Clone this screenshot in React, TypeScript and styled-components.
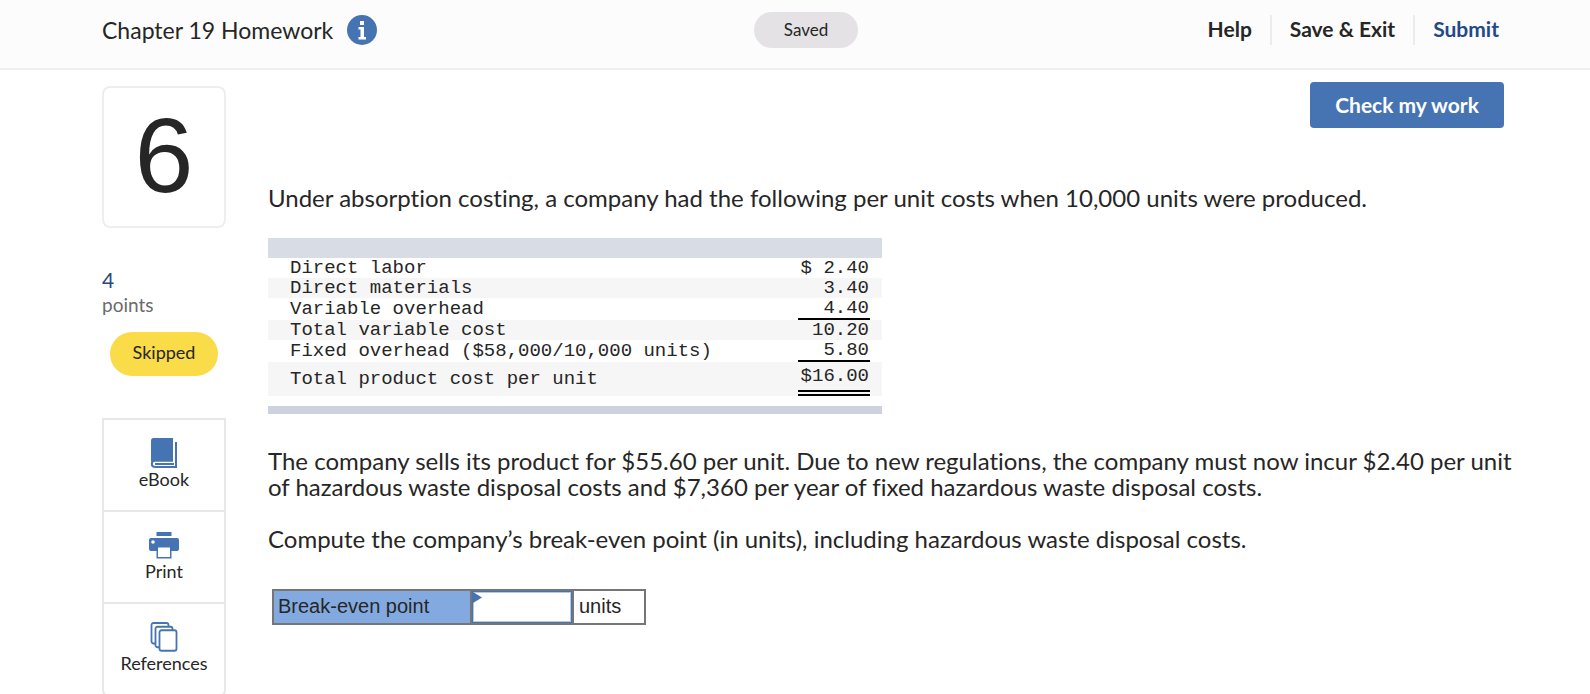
import React from "react";
import styled, { createGlobalStyle } from "styled-components";

const sans = `Lato, "Liberation Sans", sans-serif`;
const blue = "#4674b3";
const ink = "#262626";
const line = "#ececec";

const GlobalStyle = createGlobalStyle`
  * { box-sizing: border-box; }
  body {
    margin: 0;
    background: #fff;
    color: ${ink};
    font-family: ${sans};
    font-variant-ligatures: none;
  }
  button, input { font: inherit; font-variant-ligatures: none; color: inherit; margin: 0; }
`;

const Header = styled.header`
  display: grid;
  grid-template-columns: 1fr auto 1fr;
  align-items: start;
  height: 70px;
  padding: 12px 80px 0 102px;
  background: #fcfcfc;
  border-bottom: 2px solid #efefef;
`;

const TitleGroup = styled.div`
  display: flex;
  align-items: center;
  gap: 14px;
  height: 36px;
`;

const Title = styled.h1`
  margin: 0;
  font-size: 23px;
  line-height: 28px;
  font-weight: 400;
  white-space: nowrap;
`;

const InfoButton = styled.button`
  display: flex;
  padding: 0;
  border: 0;
  background: none;
`;

const SavedPill = styled.div`
  width: 104px;
  height: 36px;
  border-radius: 18px;
  background: #e4e2e5;
  font-size: 17px;
  line-height: 36px;
  text-align: center;
`;

const Nav = styled.nav`
  display: flex;
  justify-content: flex-end;
  align-items: center;
  height: 36px;
`;

const NavButton = styled.button<{ $accent?: boolean }>`
  height: 30px;
  padding: 0 18px 2px;
  border: 0;
  border-left: 2px solid ${line};
  background: none;
  color: ${(p) => (p.$accent ? "#234987" : ink)};
  font-size: 21px;
  line-height: 26px;
  font-weight: 700;
  white-space: nowrap;
  &:first-child { border-left: 0; }
  &:last-child { padding-right: 11px; }
`;

const Main = styled.main`
  display: grid;
  grid-template-columns: 124px minmax(0, 1fr);
  gap: 42px;
  padding: 12px 70px 0 102px;
`;

const Sidebar = styled.aside`
  display: flex;
  flex-direction: column;
  padding-top: 4px;
`;

const QuestionNumber = styled.div`
  height: 142px;
  border: 2px solid #eeeeee;
  border-radius: 8px;
  font-family: "Liberation Sans", sans-serif;
  font-size: 106px;
  line-height: 134px;
  text-align: center;
`;

const Points = styled.div`
  margin-top: 39px;
  color: #6b6b6b;
  font-size: 19px;
  line-height: 25px;
`;

const PointsValue = styled.div`
  color: #234987;
  font-size: 21px;
`;

const Skipped = styled.div`
  align-self: center;
  width: 108px;
  height: 44px;
  margin: 15px 0 42px;
  border-radius: 22px;
  background: #fadb48;
  font-size: 18px;
  line-height: 40px;
  text-align: center;
`;

const Tools = styled.div`
  display: flex;
  flex-direction: column;
  border: 2px solid #e8e8e8;
  border-radius: 0 0 8px 8px;
`;

const ToolButton = styled.button`
  display: flex;
  flex-direction: column;
  align-items: center;
  height: 92px;
  padding: 18px 0 0;
  border: 0;
  border-bottom: 2px solid #e8e8e8;
  background: none;
  font-size: 18px;
  line-height: 23px;
  &:last-child { border-bottom: 0; }
`;

const Content = styled.section`
  display: flex;
  flex-direction: column;
  align-items: flex-start;
`;

const CheckButton = styled.button`
  align-self: flex-end;
  width: 194px;
  height: 46px;
  margin: 0 16px 57px 0;
  border: 0;
  border-radius: 4px;
  background: ${blue};
  color: #fff;
  font-size: 21px;
  line-height: 26px;
  font-weight: 700;
`;

const Paragraph = styled.p`
  margin: 0 0 26px;
  font-size: 24px;
  line-height: 26px;
`;

const CostTable = styled.table`
  width: 614px;
  margin: 1px 0 34px;
  border-collapse: separate;
  border-spacing: 0;
  font-family: "Liberation Mono", monospace;
  font-size: 19px;
  line-height: 20px;
  td, th { padding: 0; font-weight: 400; }
`;

const Band = styled.td<{ $foot?: boolean }>`
  height: ${(p) => (p.$foot ? "18px" : "20px")};
  border-top: ${(p) => (p.$foot ? "10px solid #fff" : "0")};
  background: ${(p) => (p.$foot ? "#ccd3df" : "#d8dce5")};
`;

const CostRow = styled.tr<{ $shade: boolean; $total?: boolean }>`
  height: ${(p) => (p.$total ? "34px" : "20px")};
  background: ${(p) => (p.$shade ? "#f6f6f6" : "#fff")};
`;

const CostLabel = styled.th`
  text-align: left;
  && { padding-left: 22px; }
`;

const CostValue = styled.td`
  width: 84px;
`;

const Amount = styled.div<{ $rule?: "single" | "double" }>`
  width: 72px;
  padding-right: 1px;
  padding-top: ${(p) => (p.$rule === "double" ? "4px" : "0")};
  padding-bottom: ${(p) => (p.$rule === "double" ? "4px" : "0")};
  border-bottom: ${(p) =>
    p.$rule === "double" ? "6px double #000" : p.$rule ? "2px solid #000" : "0"};
  text-align: right;
  white-space: pre;
`;

const Answer = styled.div`
  display: flex;
  height: 36px;
  margin: 11px 0 0 4px;
  border: 2px solid #767676;
  font-family: "Liberation Sans", sans-serif;
  font-size: 20px;
  line-height: 30px;
`;

const AnswerLabel = styled.label`
  width: 198px;
  padding-left: 4px;
  border-right: 2px solid #767676;
  background: #83aae0;
`;

const AnswerField = styled.div`
  position: relative;
  display: flex;
  width: 100px;
`;

const AnswerInput = styled.input`
  width: 100%;
  padding: 0 10px;
  border: 1px solid ${blue};
  border-radius: 0;
  background: #fff;
  box-shadow: inset 0 0 0 1px #b5c8e1;
  outline: 0;
`;

const Marker = styled.svg`
  position: absolute;
  left: 1px;
  top: 1px;
`;

const Unit = styled.div`
  width: 72px;
  padding-left: 5px;
  border-left: 2px solid #767676;
`;

const rows: { label: string; value: string; rule?: "single" | "double" }[] = [
  { label: "Direct labor", value: "$ 2.40" },
  { label: "Direct materials", value: "3.40" },
  { label: "Variable overhead", value: "4.40", rule: "single" },
  { label: "Total variable cost", value: "10.20" },
  { label: "Fixed overhead ($58,000/10,000 units)", value: "5.80", rule: "single" },
  { label: "Total product cost per unit", value: "$16.00", rule: "double" },
];

const InfoIcon = () => (
  <svg width="30" height="30" viewBox="0 0 30 30" aria-hidden="true">
    <circle cx="15" cy="15" r="15" fill={blue} />
    <path fill="#fff" d="M13 6h4v4h-4zM11.500 12H17v10h2v2.500h-7.500V22h2v-7.500h-2z" />
  </svg>
);

const BookIcon = () => (
  <svg width="30" height="30" viewBox="0 0 30 30" aria-hidden="true">
    <path fill={blue} d="M4.500 0H24V22.500H6Q3.500 22.500 2 24V3Q2 0 4.500 0z" />
    <path
      fill="none"
      stroke={blue}
      strokeWidth="2"
      d="M27 4V29H6.500Q2.800 29 2.800 26T6 22.800H24M25 26H6"
    />
  </svg>
);

const PrintIcon = () => (
  <svg width="30" height="30" viewBox="0 0 30 30" aria-hidden="true">
    <path fill={blue} d="M7.500 2h15v4h-15zM2 8h26q2 0 2 2v9q0 2-2 2h-5.500v7.500h-15V21H2q-2 0-2-2v-9q0-2 2-2z" />
    <circle cx="4" cy="12" r="1.800" fill="#fff" />
    <path fill="#fff" d="M9 17.500h12V27H9z" />
  </svg>
);

const PagesIcon = () => (
  <svg width="30" height="30" viewBox="0 0 30 30" aria-hidden="true">
    <g fill="#fff" stroke={blue} strokeWidth="1.800">
      <rect x="2.500" y="1" width="17" height="20.500" rx="2" />
      <rect x="6.500" y="4.750" width="17" height="20.500" rx="2" />
      <rect x="10.500" y="8.250" width="17" height="20.500" rx="2" />
    </g>
  </svg>
);

export default function App() {
  return (
    <>
      <GlobalStyle />
      <Header>
        <TitleGroup>
          <Title>Chapter 19 Homework</Title>
          <InfoButton aria-label="Assignment information">
            <InfoIcon />
          </InfoButton>
        </TitleGroup>
        <SavedPill>Saved</SavedPill>
        <Nav>
          <NavButton>Help</NavButton>
          <NavButton>Save &amp; Exit</NavButton>
          <NavButton $accent>Submit</NavButton>
        </Nav>
      </Header>
      <Main>
        <Sidebar>
          <QuestionNumber>6</QuestionNumber>
          <Points>
            <PointsValue>4</PointsValue>
            points
          </Points>
          <Skipped>Skipped</Skipped>
          <Tools>
            <ToolButton>
              <BookIcon />
              eBook
            </ToolButton>
            <ToolButton>
              <PrintIcon />
              Print
            </ToolButton>
            <ToolButton>
              <PagesIcon />
              References
            </ToolButton>
          </Tools>
        </Sidebar>
        <Content>
          <CheckButton>Check my work</CheckButton>
          <Paragraph>
            Under absorption costing, a company had the following per unit costs when 10,000 units were produced.
          </Paragraph>
          <CostTable>
            <tbody>
              <tr>
                <Band colSpan={2} />
              </tr>
              {rows.map((row, i) => (
                <CostRow key={row.label} $shade={i % 2 === 1} $total={row.rule === "double"}>
                  <CostLabel scope="row">{row.label}</CostLabel>
                  <CostValue>
                    <Amount $rule={row.rule}>{row.value}</Amount>
                  </CostValue>
                </CostRow>
              ))}
              <tr>
                <Band $foot colSpan={2} />
              </tr>
            </tbody>
          </CostTable>
          <Paragraph>
            The company sells its product for $55.60 per unit. Due to new regulations, the company must now incur $2.40 per unit
            of hazardous waste disposal costs and $7,360 per year of fixed hazardous waste disposal costs.
          </Paragraph>
          <Paragraph>
            Compute the company’s break-even point (in units), including hazardous waste disposal costs.
          </Paragraph>
          <Answer>
            <AnswerLabel htmlFor="break-even">Break-even point</AnswerLabel>
            <AnswerField>
              <AnswerInput id="break-even" type="text" />
              <Marker width="9" height="11" viewBox="0 0 9 11" aria-hidden="true">
                <path fill={blue} d="M0 0L9 5.500L0 11z" />
              </Marker>
            </AnswerField>
            <Unit>units</Unit>
          </Answer>
        </Content>
      </Main>
    </>
  );
}
